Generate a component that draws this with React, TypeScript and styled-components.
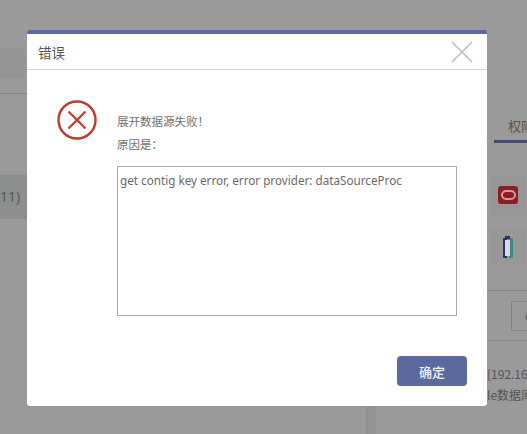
import React from "react";
import styled, { createGlobalStyle } from "styled-components";

const Global = createGlobalStyle`
  *, *::before, *::after { box-sizing: border-box; }
  html, body { margin: 0; padding: 0; }
  body { width: 527px; height: 434px; overflow: hidden; background: #9a9a9a; font-family: "Noto Sans CJK SC", "Noto Sans", sans-serif; }
`;

const Page = styled.div`
  position: relative;
  width: 527px;
  height: 434px;
  overflow: hidden;
  background: #9a9a9a;
`;

const BackLeft = styled.div`
  position: absolute;
  left: 0;
  top: 48px;
  width: 27px;
  height: 171px;
  display: flex;
  flex-direction: column;
`;

const BackSearch = styled.div`
  height: 30px;
  width: 25px;
  background: #949494;
  border-radius: 0 3px 3px 0;
`;

const BackRule = styled.div`
  height: 1px;
  margin-top: 15px;
  background: #868686;
`;

const BackRow = styled.div`
  margin-top: 81px;
  height: 44px;
  background: #8d8e8e;
  color: #555;
  font: 14px/44px "Open Sans", sans-serif;
  white-space: nowrap;
`;

const Splitter = styled.div`
  position: absolute;
  left: 366px;
  top: 406px;
  width: 10px;
  height: 28px;
  background: #929292;
`;

const BackRight = styled.div`
  position: absolute;
  left: 487px;
  top: 94px;
  width: 40px;
  height: 310px;
  display: flex;
  flex-direction: column;
  padding-left: 3px;
`;

const BackTab = styled.div`
  margin: 16px 0 0 4px;
  height: 34px;
  border-bottom: 3px solid #474c70;
  color: #575757;
  font-size: 13px;
  line-height: 31px;
  padding-left: 14px;
  white-space: nowrap;
  overflow: hidden;
`;

const Tile = styled.div`
  width: 36px;
  height: ${(p) => p.$height}px;
  margin-top: ${(p) => p.$top}px;
  background: #979797;
  display: flex;
  align-items: center;
  justify-content: center;
`;

const OracleLogo = styled.div`
  width: 20px;
  height: 18px;
  border-radius: 3px;
  background: #8e1d22;
  display: flex;
  align-items: center;
  justify-content: center;
  &::after {
    content: "";
    width: 15px;
    height: 10px;
    border: 2px solid #cf9a9c;
    border-radius: 5px;
  }
`;

const BackRuleRight = styled.div`
  height: 1px;
  margin: ${(p) => p.$top}px 0 0 -3px;
  background: #868686;
`;

const BackInput = styled.div`
  margin: 10px 0 0 21px;
  width: 40px;
  height: 30px;
  flex: none;
  border: 1px solid #858585;
  border-radius: 2px;
  color: #555;
  font-size: 13px;
  line-height: 28px;
  padding-left: 13px;
`;

const BackLine = styled.div`
  margin-left: ${(p) => p.$left}px;
  margin-top: ${(p) => p.$top}px;
  color: #555;
  font-size: 12px;
  line-height: 21px;
  white-space: nowrap;
  overflow: hidden;
`;

const Dialog = styled.div`
  position: absolute;
  left: 27px;
  top: 30px;
  width: 460px;
  height: 376px;
  background: #fff;
  border-top: 4px solid #5a6a9e;
  border-radius: 3px;
  display: flex;
  flex-direction: column;
`;

const Header = styled.div`
  height: 36px;
  flex: none;
  border-bottom: 1px solid #d5d5d5;
  display: flex;
  align-items: center;
  justify-content: space-between;
  padding: 0 14px 0 11px;
`;

const Title = styled.span`
  font-size: 13.500px;
  color: #555;
`;

const Body = styled.div`
  display: flex;
  padding-top: 30px;
  padding-left: 30px;
`;

const Content = styled.div`
  margin-left: 20px;
  padding-top: 10px;
`;

const Message = styled.div`
  font-size: 11.500px;
  line-height: 23px;
  color: #707070;
`;

const Reason = styled.div`
  width: 340px;
  height: 150px;
  margin-top: 10px;
  border: 1px solid #a9a9a9;
  padding: 5px 2px;
  font: 11.700px/17px "Noto Sans", sans-serif;
  color: #6a6a6a;
`;

const Footer = styled.div`
  display: flex;
  justify-content: flex-end;
  padding: 40px 20px 0 0;
`;

const Confirm = styled.button`
  width: 70px;
  height: 30px;
  border: 0;
  border-radius: 4px;
  background: #5a6a9e;
  color: #f1f2f7;
  font-size: 13px;
  font-family: inherit;
  font-weight: 500;
  padding: 0;
`;

export default function App() {
  return (
    <Page>
      <Global />
      <BackLeft>
        <BackSearch />
        <BackRule />
        <BackRow>11)</BackRow>
      </BackLeft>
      <Splitter />
      <BackRight>
        <BackTab>权限</BackTab>
        <Tile $top={33} $height={40}>
          <OracleLogo />
        </Tile>
        <Tile $top={15} $height={36}>
          <svg width="10" height="22" viewBox="0 0 10 22">
            <rect x="0" y="2" width="4" height="20" fill="#27306a" />
            <rect x="6" y="2" width="4" height="20" fill="#3d8a80" />
            <rect x="2" y="0" width="5" height="3" fill="#27306a" />
            <rect x="2" y="4" width="5" height="16" fill="#d8dbe0" />
          </svg>
        </Tile>
        <BackRuleRight $top={26} />
        <BackInput>c</BackInput>
        <BackRuleRight $top={9} />
        <BackLine $top={22} $left={-3}>[192.168</BackLine>
        <BackLine $top={0} $left={-3}>le数据库</BackLine>
      </BackRight>
      <Dialog>
        <Header>
          <Title>错误</Title>
          <svg width="22" height="22" viewBox="0 0 22 22" fill="none" stroke="#bdbdbd" strokeWidth="1.6">
            <path d="M1 1 L21 21 M21 1 L1 21" />
          </svg>
        </Header>
        <Body>
          <svg width="40" height="40" viewBox="0 0 40 40" fill="none" stroke="#c0392f">
            <circle cx="20" cy="20" r="18.500" strokeWidth="2.400" />
            <path d="M11.500 11.500 L28.500 28.500 M28.500 11.500 L11.500 28.500" strokeWidth="2.200" />
          </svg>
          <Content>
            <Message>展开数据源失败！</Message>
            <Message>原因是：</Message>
            <Reason>get contig key error, error provider: dataSourceProc</Reason>
          </Content>
        </Body>
        <Footer>
          <Confirm>确定</Confirm>
        </Footer>
      </Dialog>
    </Page>
  );
}
